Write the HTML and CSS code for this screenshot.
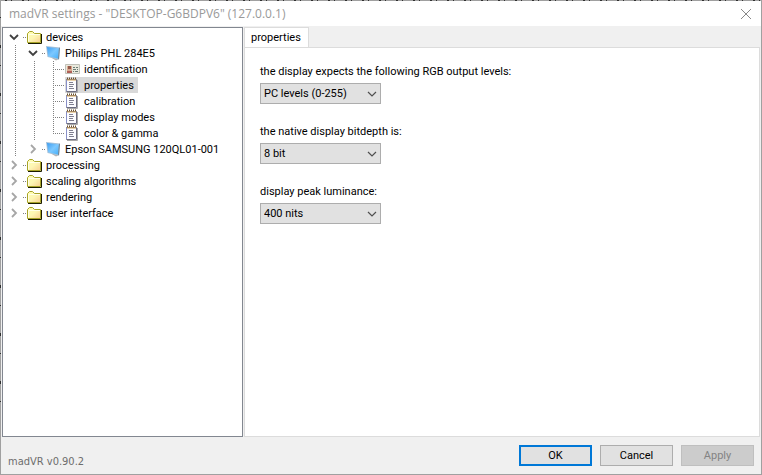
FILE: index.html
```html
<!DOCTYPE html>
<html lang="en">
<head>
  <meta charset="UTF-8">
  <title>madVR settings</title>
  <link rel="stylesheet" href="styles.css">
</head>
<body>
  <!-- shared icons -->
  <svg class="defs" aria-hidden="true">
    <defs>
      <linearGradient id="folderFill" x1="0" y1="0" x2="1" y2="1">
        <stop offset="0" stop-color="#ffffb0"/>
        <stop offset="0.5" stop-color="#fdf6b4"/>
        <stop offset="1" stop-color="#f8d090"/>
      </linearGradient>
      <linearGradient id="screenFill" x1="0" y1="0" x2="1" y2="1">
        <stop offset="0" stop-color="#3c9cf0"/>
        <stop offset="0.5" stop-color="#7cc8ff"/>
        <stop offset="1" stop-color="#46b0fa"/>
      </linearGradient>
      <symbol id="folder" viewBox="0 0 16 16">
        <path d="M1 14.500h13.500V5" fill="none" stroke="#1c1c00"/>
        <path d="M.5 13.500V4.500l2-2h3l2 2h6v9z" fill="url(#folderFill)" stroke="#a8a428"/>
        <path d="M1.500 12.500V5.500h11.500" fill="none" stroke="#ffffe8"/>
      </symbol>
      <symbol id="monitor" viewBox="0 0 16 16">
        <path d="M4 12l6 3.500 3-1.500z" fill="#b4b4b4"/>
        <path d="M0 1l14 1.500-1 12L1.500 12z" fill="#a4c0d8"/>
        <path d="M1 2l12 1.500-1 10L2.300 11.200z" fill="url(#screenFill)"/>
        <path d="M13 3l1-.5-1 12-1-1z" fill="#6a8498"/>
      </symbol>
      <symbol id="card" viewBox="0 0 16 16">
        <path d="M.5 3.500h14v9H.5z" fill="#e8e8dc" stroke="#c0c0b8"/>
        <path d="M2 5h5v7H2z" fill="#d8a890"/>
        <path d="M3 5h3v3H3z" fill="#94584a"/>
        <path d="M2 10h5v2H2z" fill="#b06058"/>
        <path d="M8 6.500h2m1 0h2M8 8.500h3m1 0h1M8 10.500h1m1 0h3" stroke="#6c7c74"/>
      </symbol>
      <symbol id="notepad" viewBox="0 0 16 16">
        <path d="M2 15.500h10.500V3" fill="none" stroke="#a8a8a8"/>
        <path d="M1.500 2.500h10v12h-10z" fill="#fcfcff" stroke="#6c6c80"/>
        <path d="M1.500 3v11" stroke="#8890c8"/>
        <path d="M2 1.500h10" stroke="#6a5030" stroke-width="2" stroke-dasharray="1 1"/>
        <path d="M2 3h9" stroke="#d8a858"/>
        <path d="M4 5.500h4M4 7.500h5M4 9.500h4M4 11.500h5" stroke="#808090"/>
      </symbol>
      <symbol id="opened" viewBox="0 0 10 16">
        <path d="M1 6l4 4 4-4" fill="none" stroke="#404040" stroke-width="1.800"/>
      </symbol>
      <symbol id="closed" viewBox="0 0 10 16">
        <path d="M3 4l4 4-4 4" fill="none" stroke="#a6a6a6" stroke-width="1.800"/>
      </symbol>
      <symbol id="arrow" viewBox="0 0 10 6">
        <path d="M1 1l4 4 4-4" fill="none" stroke="#505050" stroke-width="1.200"/>
      </symbol>
    </defs>
  </svg>

  <div class="window">
    <header class="titlebar">
      <h1>madVR settings - "DESKTOP-G6BDPV6" (127.0.0.1)</h1>
      <button class="close" aria-label="Close">
        <svg viewBox="0 0 12 12"><path d="M1 1l10 10M11 1L1 11" fill="none" stroke="#888"/></svg>
      </button>
    </header>

    <main class="content">
      <nav class="tree">
        <ul>
          <li>
            <div class="row"><svg class="toggle"><use href="#opened"/></svg><svg class="icon"><use href="#folder"/></svg><a href="#">devices</a></div>
            <ul class="children">
              <li>
                <div class="row"><svg class="toggle"><use href="#opened"/></svg><svg class="icon"><use href="#monitor"/></svg><a href="#">Philips PHL 284E5</a></div>
                <ul class="children">
                  <li class="row leaf"><svg class="icon"><use href="#card"/></svg><a href="#">identification</a></li>
                  <li class="row leaf selected"><svg class="icon"><use href="#notepad"/></svg><a href="#">properties</a></li>
                  <li class="row leaf"><svg class="icon"><use href="#notepad"/></svg><a href="#">calibration</a></li>
                  <li class="row leaf"><svg class="icon"><use href="#notepad"/></svg><a href="#">display modes</a></li>
                  <li class="row leaf"><svg class="icon"><use href="#notepad"/></svg><a href="#">color &amp; gamma</a></li>
                </ul>
              </li>
              <li>
                <div class="row"><svg class="toggle"><use href="#closed"/></svg><svg class="icon"><use href="#monitor"/></svg><a href="#">Epson SAMSUNG 120QL01-001</a></div>
              </li>
            </ul>
          </li>
          <li class="row"><svg class="toggle"><use href="#closed"/></svg><svg class="icon"><use href="#folder"/></svg><a href="#">processing</a></li>
          <li class="row"><svg class="toggle"><use href="#closed"/></svg><svg class="icon"><use href="#folder"/></svg><a href="#">scaling algorithms</a></li>
          <li class="row"><svg class="toggle"><use href="#closed"/></svg><svg class="icon"><use href="#folder"/></svg><a href="#">rendering</a></li>
          <li class="row"><svg class="toggle"><use href="#closed"/></svg><svg class="icon"><use href="#folder"/></svg><a href="#">user interface</a></li>
        </ul>
      </nav>

      <section class="tabs">
        <div role="tablist"><button class="tab" role="tab" aria-selected="true">properties</button></div>
        <div class="page" role="tabpanel">
          <div class="field">
            <label for="levels">the display expects the following RGB output levels:</label>
            <div class="select">
              <select id="levels"><option>PC levels (0-255)</option><option>TV levels (16-235)</option></select>
              <svg><use href="#arrow"/></svg>
            </div>
          </div>
          <div class="field">
            <label for="bitdepth">the native display bitdepth is:</label>
            <div class="select">
              <select id="bitdepth"><option>8 bit</option><option>10 bit</option></select>
              <svg><use href="#arrow"/></svg>
            </div>
          </div>
          <div class="field">
            <label for="luminance">display peak luminance:</label>
            <div class="select">
              <select id="luminance"><option>400 nits</option></select>
              <svg><use href="#arrow"/></svg>
            </div>
          </div>
        </div>
      </section>
    </main>

    <footer class="footer">
      <span class="version">madVR v0.90.2</span>
      <button class="btn default">OK</button>
      <button class="btn">Cancel</button>
      <button class="btn" disabled>Apply</button>
    </footer>
  </div>
</body>
</html>
```
FILE: styles.css
```css
* {
  box-sizing: border-box;
}

/* what shows of the desktop behind the window: one row on top, one column left */
body {
  margin: 0;
  padding: 1px;
  height: 100vh;
  background:
    repeating-linear-gradient(90deg, transparent 0 5px, #303030 5px 7px, transparent 7px 11px, #303030 11px 12px, transparent 12px 17px) 0 0 / 100% 1px no-repeat,
    repeating-linear-gradient(transparent 0 17px, #303030 17px 18px, transparent 18px 45px, #303030 45px 48px) 0 0 / 1px 405px no-repeat,
    #a0a0a0;
  font: 11px/18px Roboto, "Noto Sans", sans-serif;
  color: #000;
}

button, select {
  font: inherit;
  color: inherit;
}

.defs {
  position: absolute;
  width: 0;
  height: 0;
}

.window {
  height: 100%;
  display: flex;
  flex-direction: column;
  background: #f0f0f0;
}

.titlebar {
  display: flex;
  align-items: center;
  justify-content: space-between;
  height: 25px;
  padding: 0 9px 0 8px;
  background: #fff;
}

.titlebar h1 {
  margin: 0;
  font: 12px/16px "Open Sans", sans-serif;
  color: #999;
}

.close {
  display: flex;
  padding: 0;
  border: 0;
  background: none;
}

.close svg {
  width: 12px;
  height: 12px;
}

.content {
  flex: 1;
  display: flex;
  padding: 1px 1px 0;
}

/* tree */
.tree {
  width: 241px;
  padding: 1px 2px;
  border: 1px solid #828790;
  background: #fff;
}

.tree ul {
  margin: 0;
  padding: 0;
  list-style: none;
}

.tree .children {
  padding-left: 19px;
  background: repeating-linear-gradient(#808080 0 1px, transparent 1px 2px) 10px 0 / 1px 100% no-repeat;
}

.row {
  display: flex;
  height: 16px;
  background: repeating-linear-gradient(90deg, #808080 0 1px, transparent 1px 2px) 18px 8px / 3px 1px no-repeat;
}

.toggle {
  width: 10px;
  height: 16px;
  margin: 0 8px 0 4px;
}

.row .icon {
  width: 16px;
  height: 16px;
}

.row a {
  padding: 0 4px 0 3px;
  color: inherit;
  text-decoration: none;
  white-space: nowrap;
}

.leaf {
  padding-left: 22px;
  background:
    repeating-linear-gradient(90deg, #808080 0 1px, transparent 1px 2px) 10px 8px / 11px 1px no-repeat,
    repeating-linear-gradient(#808080 0 1px, transparent 1px 2px) 10px 0 / 1px 100% no-repeat;
}

.leaf:last-child {
  background-size: 11px 1px, 1px 8px;
}

.selected .icon, .selected a {
  background: #d9d9d9;
}

/* tabs */
.tabs {
  flex: 1;
  display: flex;
  flex-direction: column;
  margin-left: 1px;
}

.tab {
  display: block;
  height: 21px;
  margin-bottom: -1px;
  padding: 0 7px 0 6px;
  border: 1px solid #dcdcdc;
  border-bottom: 0;
  background: #fff;
}

.page {
  flex: 1;
  padding: 15px;
  border: 1px solid #dcdcdc;
  background: #fff;
}

.field {
  margin-bottom: 19px;
}

.field label {
  display: block;
  margin-bottom: 2px;
}

.select {
  display: grid;
  width: 121px;
  align-items: center;
}

.select select, .select svg {
  grid-area: 1 / 1;
}

.select select {
  appearance: none;
  width: 100%;
  height: 21px;
  padding: 0 3px;
  border: 1px solid #adadad;
  border-radius: 0;
  background: #e1e1e1;
}

.select svg {
  justify-self: end;
  width: 10px;
  height: 6px;
  margin-right: 4px;
  pointer-events: none;
}

/* footer */
.footer {
  display: flex;
  height: 37px;
  gap: 8px;
  padding: 8px 7px;
}

.version {
  margin: 8px auto 0 0;
  font-family: "DejaVu Sans Condensed", sans-serif;
  color: #6d6d6d;
}

.btn {
  width: 73px;
  height: 21px;
  padding: 0;
  border: 1px solid #adadad;
  background: #e1e1e1;
}

.default {
  border: 2px solid #0078d7;
}

.btn:disabled {
  border-color: #bfbfbf;
  background: #ccc;
  color: #838383;
}
```
